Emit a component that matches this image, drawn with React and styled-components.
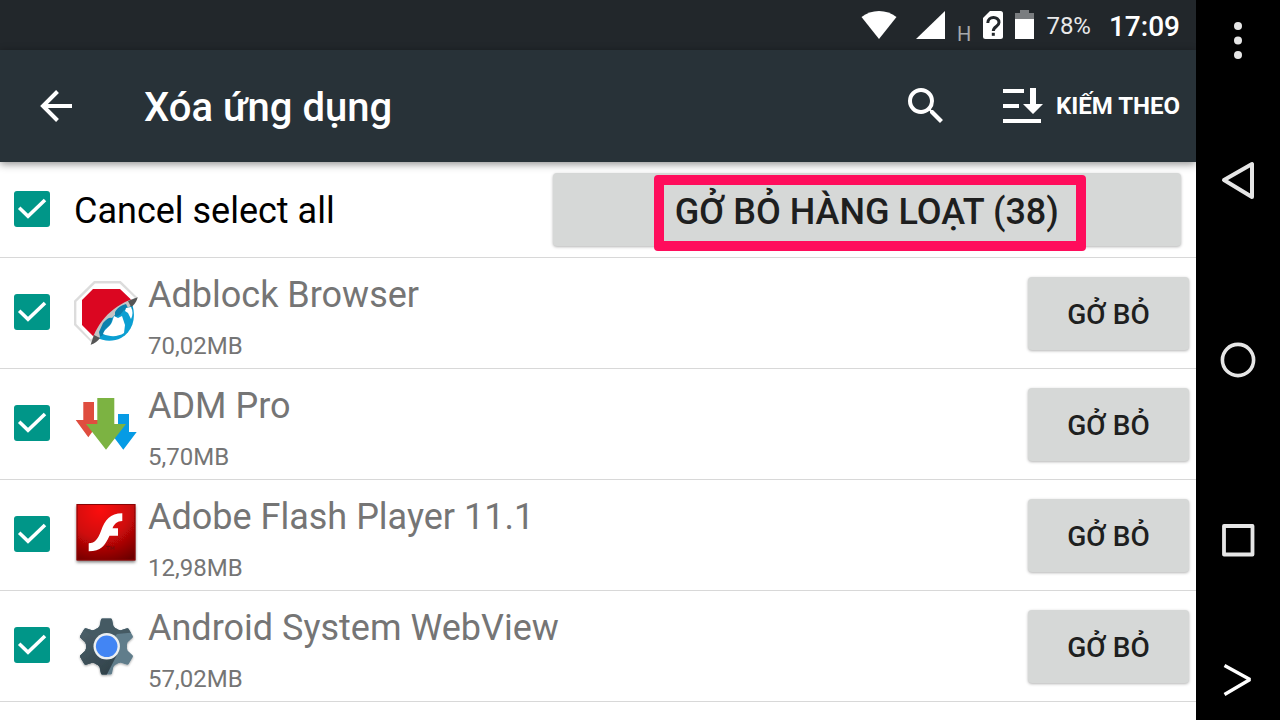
import React, { useState } from "react";
import styled, { createGlobalStyle } from "styled-components";

const GlobalStyle = createGlobalStyle`
  * {
    box-sizing: border-box;
  }
  body {
    margin: 0;
    background: #000;
    font-family: Roboto, "Noto Sans", sans-serif;
  }
  button {
    font-family: inherit;
    border: none;
    padding: 0;
    cursor: pointer;
  }
  svg {
    display: block;
    flex-shrink: 0;
  }
`;

const Screen = styled.div`
  display: flex;
  height: 100vh;
  overflow: hidden;
`;

const Main = styled.main`
  flex: 1;
  min-width: 0;
  display: flex;
  flex-direction: column;
  background: #fff;
`;

const StatusBar = styled.div`
  display: flex;
  align-items: center;
  justify-content: flex-end;
  gap: 12px;
  height: 50px;
  padding-right: 16px;
  background: #22272b;
  color: #fff;
`;

const StatusGroup = styled.div`
  display: flex;
  align-items: center;
  gap: ${(props) => props.$gap}px;
`;

const NetworkType = styled.span`
  align-self: flex-end;
  margin-bottom: 8px;
  font-size: 20px;
  line-height: 16px;
  color: #a7a9ab;
`;

const BatteryText = styled.span`
  padding-top: 2px;
  font-size: 24px;
  line-height: 28px;
  color: #e9e9ea;
`;

const Clock = styled.span`
  margin-left: 6px;
  padding-top: 4px;
  font-size: 28px;
  font-weight: 500;
  line-height: 32px;
`;

const Toolbar = styled.header`
  position: relative;
  display: flex;
  align-items: center;
  height: 112px;
  padding: 0 16px 0 32px;
  background: #283238;
  color: #fff;
  box-shadow: 0 2px 8px rgba(0, 0, 0, 0.45);
`;

const ToolButton = styled.button`
  display: flex;
  align-items: center;
  gap: 12px;
  background: none;
  color: #fff;
  font-size: 24px;
  font-weight: 700;
  line-height: 28px;
`;

const Title = styled.h1`
  flex: 1;
  margin: 0 0 0 64px;
  padding-top: 4px;
  font-size: 40px;
  font-weight: 500;
  line-height: 48px;
`;

const Actions = styled.div`
  display: flex;
  align-items: center;
  gap: 50px;
`;

const SelectAllRow = styled.div`
  display: grid;
  grid-template-columns: 6fr 7fr;
  align-items: center;
  height: 96px;
  padding: 0 15px 0 14px;
  border-bottom: 1px solid #d8d8d8;
`;

const SelectAllLabel = styled.label`
  display: flex;
  align-items: center;
  gap: 24px;
  font-size: 36px;
  line-height: 42px;
  color: #000;
`;

const SelectAllText = styled.span`
  padding-top: 2px;
`;

const GreyButton = styled.button`
  height: 73px;
  min-width: 161px;
  padding-top: 4px;
  border-radius: 4px;
  background: #d6d8d7;
  color: #1e1f1f;
  font-size: ${(props) => (props.$large ? 36 : 28)}px;
  font-weight: 500;
  line-height: 42px;
  box-shadow: 0 1px 3px rgba(0, 0, 0, 0.3);
`;

const Highlighted = styled.span`
  position: relative;

  &::after {
    content: "";
    position: absolute;
    inset: -16px -27px -18px -21px;
    border: 10px solid #ff0d5c;
    border-radius: 4px;
    pointer-events: none;
  }
`;

const List = styled.ul`
  margin: 0;
  padding: 0;
  list-style: none;
`;

const Row = styled.li`
  display: flex;
  align-items: center;
  height: 111px;
  padding: 0 7px 0 14px;
  border-bottom: 1px solid #d8d8d8;
`;

const RowLabel = styled.label`
  flex: 1;
  display: flex;
  align-items: center;
  min-width: 0;
`;

const IconBox = styled.span`
  margin: 0 10px 0 24px;
`;

const AppText = styled.span`
  display: flex;
  flex-direction: column;
  gap: 16px;
  padding-top: 8px;
  color: #757575;
`;

const AppName = styled.span`
  font-size: 36px;
  line-height: 42px;
`;

const AppSize = styled.span`
  font-size: 24px;
  line-height: 28px;
`;

const CheckWrap = styled.span`
  display: grid;
  flex-shrink: 0;
  padding-bottom: 2px;

  > * {
    grid-area: 1 / 1;
  }
  svg {
    pointer-events: none;
  }
`;

const CheckInput = styled.input`
  appearance: none;
  width: 36px;
  height: 36px;
  margin: 0;
  border: 4px solid #757575;
  border-radius: 3px;

  &:checked {
    border-color: #009688;
    background: #009688;
  }
`;

const SideNav = styled.nav`
  display: flex;
  flex-direction: column;
  justify-content: space-between;
  width: 84px;
  background: #000;
`;

const NavGroup = styled.div`
  display: flex;
  flex-direction: column;
  flex: 0 0 75%;
`;

const NavButton = styled.button`
  display: flex;
  align-items: center;
  justify-content: center;
  flex: ${(props) => (props.$edge ? "0 0 80px" : 1)};
  background: none;
  color: #e6e6e6;
`;

const Checkbox = ({ id, checked, onChange }) => (
  <CheckWrap>
    <CheckInput id={id} type="checkbox" checked={checked} onChange={onChange} />
    {checked && (
      <svg width="36" height="36" viewBox="0 0 36 36" fill="none">
        <path d="M5.2 16.8 L14 25.2 L31 9" stroke="#fff" strokeWidth="3.6" />
      </svg>
    )}
  </CheckWrap>
);

const AdblockIcon = () => (
  <svg width="64" height="64" viewBox="0 0 64 64">
    <path d="M0 19.7 L20 0 H46.7 L63 16 L17 61 L0 44 Z" fill="#dcdcdc" />
    <path d="M2.4 20.7 L21 2.4 H45.7 L61 17 L17 58.5 L2.4 43 Z" fill="#fff" />
    <path d="M8 19 L19 8 H46 L57 18.5 L40 32 L20 56 L8 44 Z" fill="#db0621" />
    <path d="M22 56 C30 61 40 60.5 47 57 C58 51 62.5 38 58.5 24 L50 22 C38 29 28 40 22 56 Z" fill="#0b9fd2" />
    <path d="M16.7 63.7 C23 40 40 23 63.7 16.3 C61 22 59 24 55 26 C40 31 32 42 26 56 C24 59 21 62 16.7 63.7 Z" fill="#c4c4c4" />
    <path d="M29 42 C33 37 36 36 38 37 C38 43 35 45 31 48 L29 54 L26 56 L25 51 Z" fill="#0a80ad" />
    <path d="M41 31 C44 26 48 24 52 23 L54 27 L59 27 L57 30 L50 29 L46 34 L41 36 Z" fill="#0a80ad" />
    <path d="M29 53 C31 47 36 46 38 41 L40 35 L44 37 L48 35 L51 44 L50 52 C44 56 36 56 29 53 Z" fill="#fff" />
    <path d="M52 27 L57 26 C59 30 59 34 57 38 L54 32 L51 30 Z" fill="#fff" />
    <path d="M54 20 L63.7 16.3 C62 22 60 24 57 26 Z" fill="#555" />
    <path d="M16.7 63.7 L20 54 L26 57 C24 60 20 63 16.7 63.7 Z" fill="#555" />
  </svg>
);

const AdmIcon = () => (
  <svg width="64" height="64" viewBox="0 0 64 64">
    <path d="M9.3 10 H20 V28 H27 L14.3 45.3 L1.7 28 H9.3 Z" fill="#df4d3f" />
    <path d="M44 22 H55 V40 H62.7 L49.3 57.7 L36 40 H44 Z" fill="#069be5" />
    <path d="M23.3 6 H40.3 V32 H52 L32 57.7 L12 32 H23.3 Z" fill="#7cb342" />
  </svg>
);

const FlashIcon = () => (
  <svg width="64" height="64" viewBox="0 0 64 64">
    <defs>
      <radialGradient id="flashRed" cx="0.4" cy="0.1" r="1">
        <stop offset="0" stopColor="#fb0d0d" />
        <stop offset="0.5" stopColor="#cf0808" />
        <stop offset="1" stopColor="#6d0202" />
      </radialGradient>
      <filter id="flashShadow" x="-10%" y="-10%" width="120%" height="130%">
        <feDropShadow dx="0" dy="2" stdDeviation="1.5" floodOpacity="0.5" />
      </filter>
    </defs>
    <rect x="2.6" y="1" width="58.8" height="56.4" fill="url(#flashRed)" filter="url(#flashShadow)" />
    <rect x="3.1" y="1.5" width="57.8" height="55.4" fill="none" stroke="#8a0505" />
    <path
      d="M48.3 10.3 V18 C43 18.3 40.5 20.5 38.5 25.3 H44 V32.7 H35.5 C31 42.5 27 48.3 14.7 48.3 V40.3 C21 40 24 36 27 28 C31 17 36 10.3 48.3 10.3 Z"
      fill="#fff"
    />
    <path d="M32 43.5 H36 M34 43.5 V47 M37 47 V43.5 L38.5 46 L40 43.5 V47" stroke="#7a0a0a" fill="none" />
  </svg>
);

const GEAR_ANGLES = [0, 60, 120, 180, 240, 300];

const WebViewIcon = () => (
  <svg width="64" height="64" viewBox="0 0 64 64">
    <defs>
      <clipPath id="gear">
        <circle cx="32.5" cy="32.5" r="20.5" />
        {GEAR_ANGLES.map((angle) => (
          <path
            key={angle}
            d="M28.4 4.5 H36.6 Q37.7 4.5 38 5.6 L39.4 12 L43 16 V32 H22 V16 L25.6 12 L27 5.6 Q27.3 4.5 28.4 4.5 Z"
            transform={`rotate(${angle} 32.5 32.5)`}
          />
        ))}
      </clipPath>
      <linearGradient id="gearDark" x1="0" y1="0" x2="0.6" y2="1">
        <stop offset="0" stopColor="#50646e" />
        <stop offset="1" stopColor="#32434b" />
      </linearGradient>
      <filter id="gearShadow" x="-10%" y="-10%" width="120%" height="120%">
        <feDropShadow dx="0" dy="1" stdDeviation="0.8" floodOpacity="0.35" />
      </filter>
    </defs>
    <g filter="url(#gearShadow)">
      <g clipPath="url(#gear)">
        <rect width="64" height="64" fill="#607d8b" />
        <path d="M0 0 H64 V18 L43 20 L32.5 32.5 L43 41 L31 64 H0 Z" fill="#455a64" />
        <path d="M4 12 L24 26 L42 42 L31 64 H0 Z" fill="url(#gearDark)" />
      </g>
    </g>
    <circle cx="32.7" cy="32.3" r="13.2" fill="#eceff1" />
    <circle cx="32.7" cy="32.3" r="10.8" fill="#4285f4" />
  </svg>
);

const APPS = [
  { name: "Adblock Browser", size: "70,02MB", Icon: AdblockIcon },
  { name: "ADM Pro", size: "5,70MB", Icon: AdmIcon },
  { name: "Adobe Flash Player 11.1", size: "12,98MB", Icon: FlashIcon },
  { name: "Android System WebView", size: "57,02MB", Icon: WebViewIcon },
];

const TOTAL_APPS = 38;

const App = () => {
  const [unchecked, setUnchecked] = useState([]);

  const toggleApp = (name) => {
    setUnchecked(
      unchecked.includes(name) ? unchecked.filter((item) => item !== name) : [...unchecked, name]
    );
  };

  const toggleAll = () => {
    setUnchecked(unchecked.length ? [] : APPS.map((item) => item.name));
  };

  return (
    <Screen>
      <GlobalStyle />
      <Main>
        <StatusBar>
          <StatusGroup $gap={19}>
            <svg width="36" height="28" viewBox="0 0 36 28" fill="#fff">
              <path d="M0.5 6 C10 -2 26 -2 35.5 6 L18 28 Z" />
            </svg>
            <svg width="29" height="28" viewBox="0 0 29 28" fill="#fff">
              <path d="M0 28 L29 0 V28 Z" />
            </svg>
          </StatusGroup>
          <NetworkType>H</NetworkType>
          <StatusGroup $gap={12}>
            <svg width="20" height="28" viewBox="0 0 20 28">
              <path d="M7 0 H17.5 Q20 0 20 2.5 V25.5 Q20 28 17.5 28 H2.5 Q0 28 0 25.5 V7 Z" fill="#fff" />
              <path d="M4.8 12 C4.8 4.8 16 4.8 16 11.5 C16 15.5 10.3 15.5 10.3 20" fill="none" stroke="#22272b" strokeWidth="3" />
              <rect x="8.8" y="21.8" width="3" height="3" fill="#22272b" />
            </svg>
            <svg width="19" height="30" viewBox="0 0 19 30">
              <path d="M5 0 H14 V3 H19 V9 H0 V3 H5 Z" fill="#7a7d80" />
              <path d="M0 9 H19 V29 H0 Z" fill="#fff" />
            </svg>
          </StatusGroup>
          <BatteryText>78%</BatteryText>
          <Clock>17:09</Clock>
        </StatusBar>

        <Toolbar>
          <ToolButton aria-label="Back">
            <svg width="48" height="48" viewBox="0 0 48 48" fill="none" stroke="#fff" strokeWidth="4">
              <path d="M40 24 H11 M25.5 9.5 L11 24 L25.5 38.5" />
            </svg>
          </ToolButton>
          <Title>Xóa ứng dụng</Title>
          <Actions>
            <ToolButton aria-label="Search">
              <svg width="48" height="48" viewBox="0 0 24 24" fill="#fff">
                <path d="M15.5 14h-.79l-.28-.27A6.47 6.47 0 0 0 16 9.5 6.5 6.5 0 1 0 9.5 16c1.61 0 3.09-.59 4.23-1.57l.27.28v.79l5 4.99L20.49 19l-4.99-5zm-6 0C7.01 14 5 11.99 5 9.5S7.01 5 9.5 5 14 7.01 14 9.5 11.99 14 9.5 14z" />
              </svg>
            </ToolButton>
            <ToolButton>
              <svg width="44" height="36" viewBox="0 0 44 36" fill="#fff">
                <path d="M3 1 H24 V5 H3 Z M3 16 H19 V20 H3 Z M3 31 H41 V35 H3 Z" />
                <path d="M30 0 H36 V16 H43 L33 26 L23 16 H30 Z" />
              </svg>
              KIẾM THEO
            </ToolButton>
          </Actions>
        </Toolbar>

        <SelectAllRow>
          <SelectAllLabel htmlFor="select-all">
            <Checkbox id="select-all" checked={!unchecked.length} onChange={toggleAll} />
            <SelectAllText>Cancel select all</SelectAllText>
          </SelectAllLabel>
          <GreyButton $large>
            <Highlighted>GỞ BỎ HÀNG LOẠT ({TOTAL_APPS - unchecked.length})</Highlighted>
          </GreyButton>
        </SelectAllRow>

        <List>
          {APPS.map(({ name, size, Icon }, index) => (
            <Row key={name}>
              <RowLabel htmlFor={`app-${index}`}>
                <Checkbox
                  id={`app-${index}`}
                  checked={!unchecked.includes(name)}
                  onChange={() => toggleApp(name)}
                />
                <IconBox>
                  <Icon />
                </IconBox>
                <AppText>
                  <AppName>{name}</AppName>
                  <AppSize>{size}</AppSize>
                </AppText>
              </RowLabel>
              <GreyButton>GỞ BỎ</GreyButton>
            </Row>
          ))}
        </List>
      </Main>

      <SideNav>
        <NavButton $edge aria-label="Menu">
          <svg width="36" height="40" viewBox="0 0 36 40" fill="currentColor">
            <circle cx="18" cy="6" r="4" />
            <circle cx="18" cy="20.5" r="4" />
            <circle cx="18" cy="35" r="4" />
          </svg>
        </NavButton>
        <NavGroup>
          <NavButton aria-label="Back">
            <svg width="36" height="40" viewBox="0 0 36 40" fill="none" stroke="currentColor" strokeWidth="4" strokeLinejoin="round">
              <path d="M4 20 L32 4 V37 Z" />
            </svg>
          </NavButton>
          <NavButton aria-label="Home">
            <svg width="36" height="36" viewBox="0 0 36 36" fill="none" stroke="currentColor" strokeWidth="3.6">
              <circle cx="18" cy="18" r="15.6" />
            </svg>
          </NavButton>
          <NavButton aria-label="Recent apps">
            <svg width="36" height="36" viewBox="0 0 36 36" fill="none" stroke="currentColor" strokeWidth="3.8" strokeLinejoin="round">
              <rect x="4" y="4" width="28.5" height="28.5" />
            </svg>
          </NavButton>
        </NavGroup>
        <NavButton $edge aria-label="Hide">
          <svg width="36" height="36" viewBox="0 0 36 36" fill="none" stroke="#fff" strokeWidth="3.4">
            <path d="M4.5 3.5 L30 17.5 L4.5 32.5" strokeLinejoin="bevel" />
          </svg>
        </NavButton>
      </SideNav>
    </Screen>
  );
};

export default App;
